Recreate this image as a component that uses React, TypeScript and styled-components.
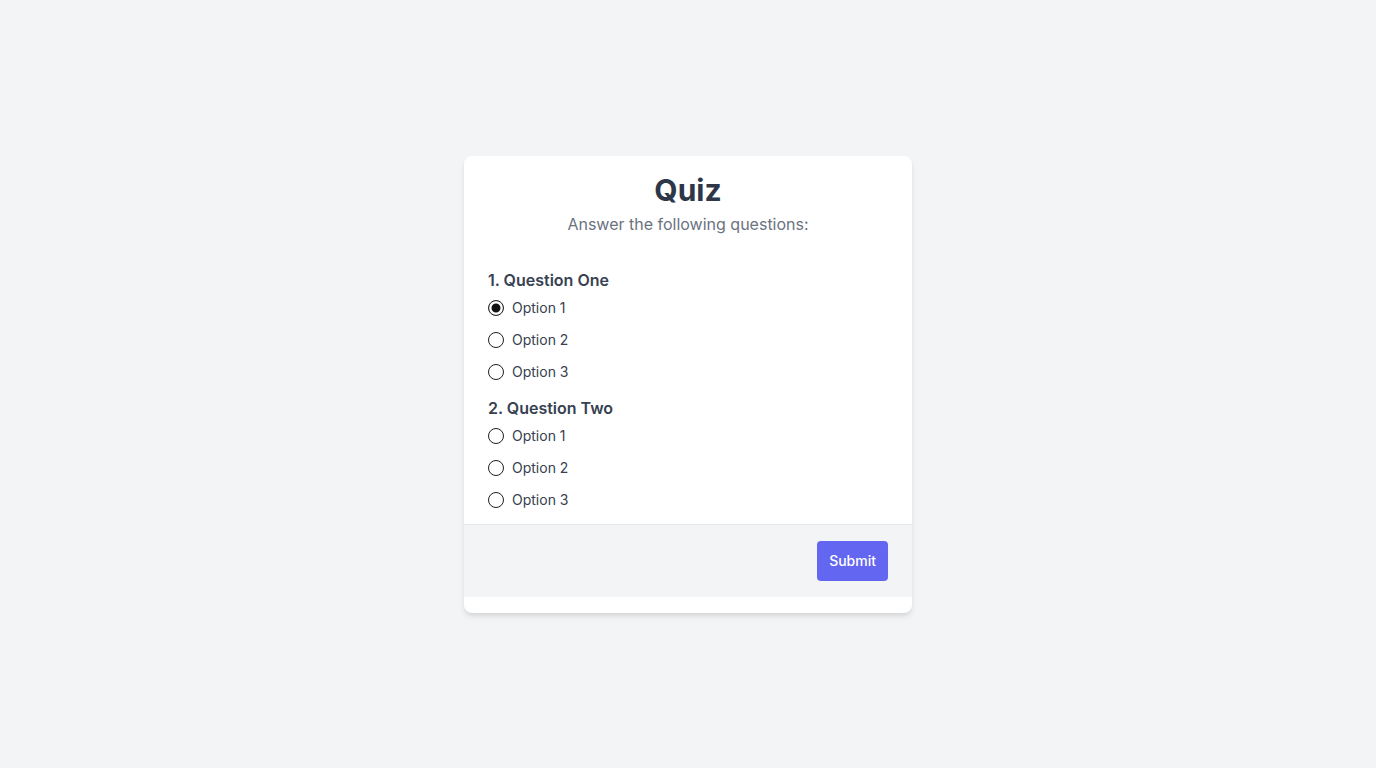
import React, { useState } from "react";
import styled, { createGlobalStyle } from "styled-components";

const GlobalStyle = createGlobalStyle`
  html, body { margin: 0; padding: 0; }
  body {
    background: #f3f4f6;
    font-family: Inter, "Noto Sans", Arial, sans-serif;
    -webkit-font-smoothing: antialiased;
  }
  * { box-sizing: border-box; }
`;

const Page = styled.div`
  min-height: 100vh;
  display: flex;
  align-items: center;
  justify-content: center;
`;

const Card = styled.div`
  width: 448px;
  background: #ffffff;
  border-radius: 8px;
  box-shadow: 0 4px 6px -1px rgba(0, 0, 0, 0.1), 0 2px 4px -1px rgba(0, 0, 0, 0.06);
  padding-bottom: 16px;
  overflow: hidden;
`;

const Header = styled.header`
  padding: 16px 24px 0;
  text-align: center;
`;

const Title = styled.h1`
  margin: 0;
  font-size: 30px;
  line-height: 36px;
  font-weight: 700;
  color: #2d3748;
`;

const Subtitle = styled.p`
  margin: 4px 0 0;
  font-size: 16px;
  line-height: 24px;
  color: #6b7280;
`;

const Body = styled.form`
  padding: 32px 24px 14px;
  display: flex;
  flex-direction: column;
  gap: 14px;
`;

const Question = styled.fieldset`
  border: 0;
  margin: 0;
  padding: 0;
  min-width: 0;
  display: flex;
  flex-direction: column;
`;

const QuestionTitle = styled.legend`
  padding: 0;
  margin: 0 0 6px;
  font-size: 16px;
  line-height: 24px;
  font-weight: 600;
  color: #374151;
`;

const Options = styled.div`
  display: flex;
  flex-direction: column;
  gap: 12px;
`;

const OptionRow = styled.label`
  display: flex;
  align-items: center;
  gap: 8px;
  height: 20px;
  font-size: 14px;
  line-height: 20px;
  color: #374151;
  cursor: pointer;
`;

const Radio = styled.input`
  appearance: none;
  -webkit-appearance: none;
  margin: 0;
  width: 16px;
  height: 16px;
  border-radius: 50%;
  border: 1px solid #1f1f1f;
  background: #ffffff;
  flex-shrink: 0;
  &:checked {
    box-shadow: inset 0 0 0 2.5px #ffffff, inset 0 0 0 8px #111111;
  }
`;

const Footer = styled.div`
  background: #f3f4f6;
  border-top: 1px solid #e5e7eb;
  padding: 16px 24px;
  display: flex;
  justify-content: flex-end;
`;

const SubmitButton = styled.button`
  border: 0;
  border-radius: 4px;
  background: #6366f1;
  color: #ffffff;
  font-family: inherit;
  font-size: 14px;
  line-height: 20px;
  font-weight: 500;
  padding: 10px 12px;
  cursor: pointer;
`;

const questions = [
  { title: "1. Question One", options: ["Option 1", "Option 2", "Option 3"] },
  { title: "2. Question Two", options: ["Option 1", "Option 2", "Option 3"] },
];

export default function App() {
  const [answers, setAnswers] = useState<Record<number, number>>({ 0: 0 });
  return (
    <>
      <GlobalStyle />
      <Page>
        <Card>
          <Header>
            <Title>Quiz</Title>
            <Subtitle>Answer the following questions:</Subtitle>
          </Header>
          <Body onSubmit={(e) => e.preventDefault()}>
            {questions.map((q, qi) => (
              <Question key={qi}>
                <QuestionTitle>{q.title}</QuestionTitle>
                <Options>
                  {q.options.map((o, oi) => (
                    <OptionRow key={oi}>
                      <Radio
                        type="radio"
                        name={`q${qi}`}
                        checked={answers[qi] === oi}
                        onChange={() => setAnswers({ ...answers, [qi]: oi })}
                      />
                      {o}
                    </OptionRow>
                  ))}
                </Options>
              </Question>
            ))}
          </Body>
          <Footer>
            <SubmitButton type="button">Submit</SubmitButton>
          </Footer>
        </Card>
      </Page>
    </>
  );
}
